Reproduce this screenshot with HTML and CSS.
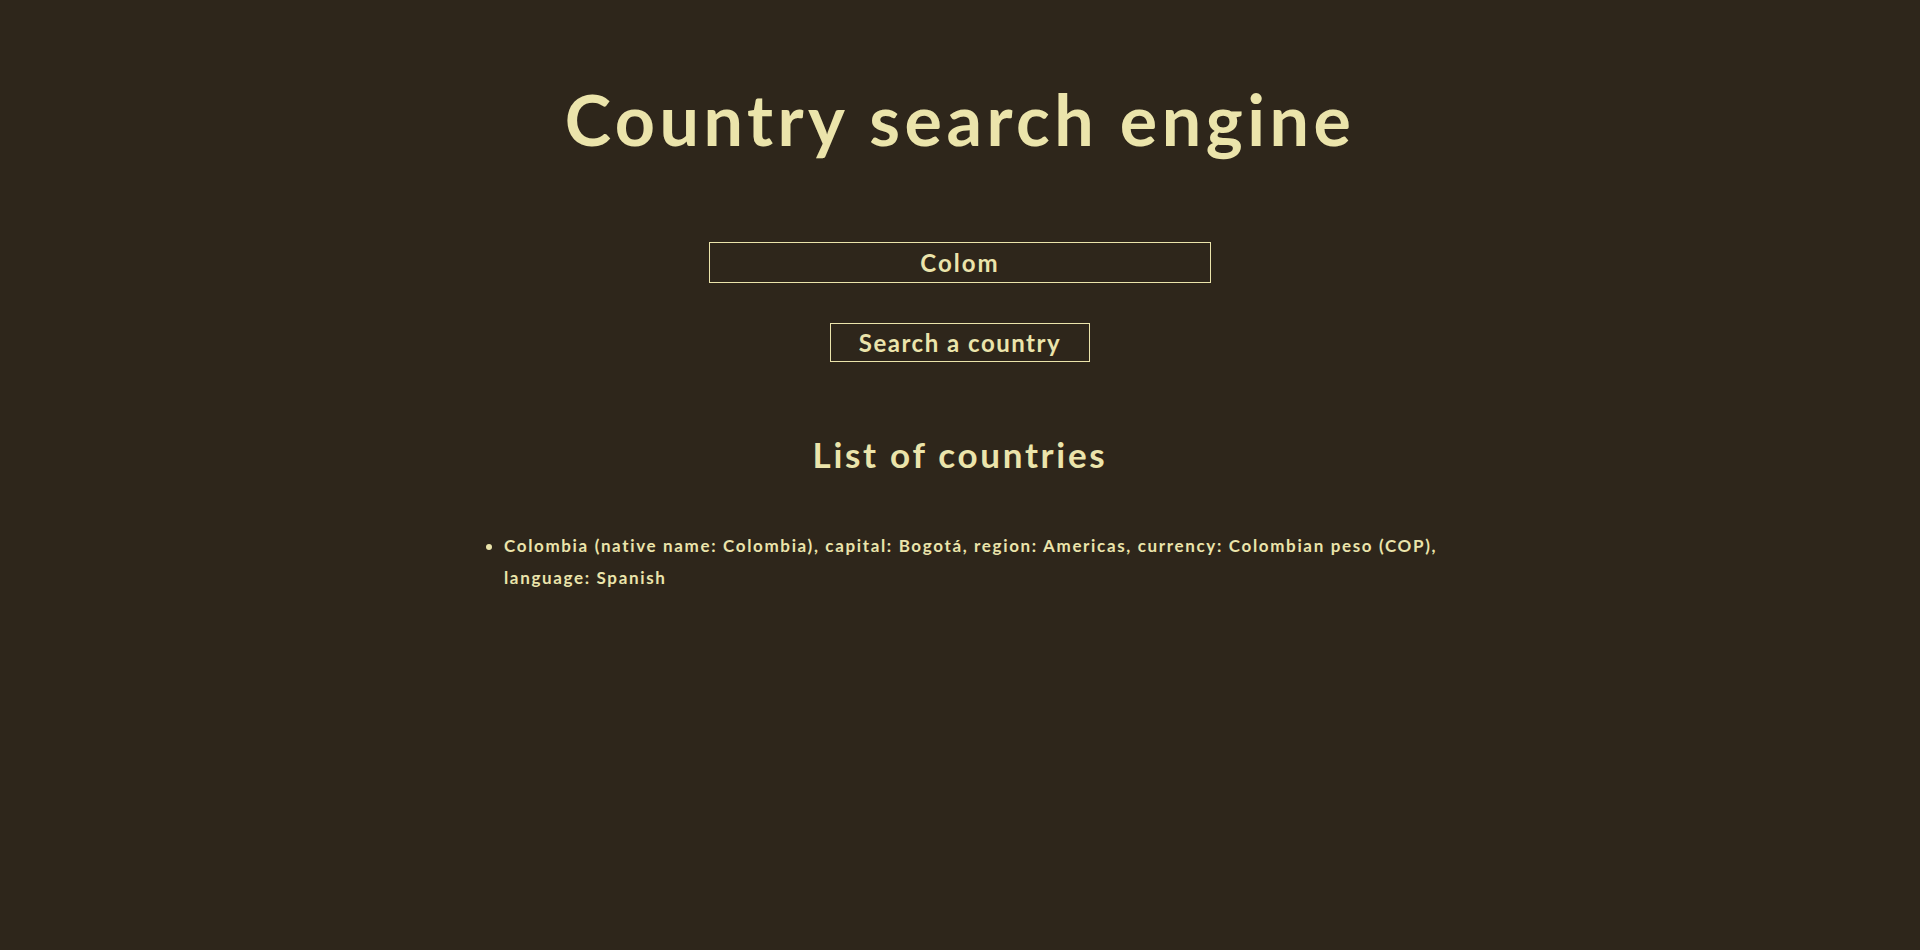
FILE: index.html
```html
<!DOCTYPE html>
<html lang="en">
<head>
<meta charset="utf-8">
<title>Country search engine</title>
<link rel="stylesheet" href="styles.css">
</head>
<body>
<main class="page">
  <h1 class="title">Country search engine</h1>
  <form class="search">
    <input class="search-input" type="text" value="Colom">
    <button class="search-button" type="button">Search a country</button>
  </form>
  <section class="results">
    <h2 class="results-title">List of countries</h2>
    <ul class="results-list">
      <li>Colombia (native name: Colombia), capital: Bogotá, region: Americas, currency: Colombian peso (COP), language: Spanish</li>
    </ul>
  </section>
</main>
</body>
</html>
```
FILE: styles.css
```css
html, body {
  margin: 0;
  padding: 0;
  background: #2e261b;
  height: 100%;
}
body {
  color: #ebe4ab;
  font-family: Lato, "Open Sans", sans-serif;
  font-weight: 700;
}
.page {
  width: 992px;
  margin: 0 auto;
  display: flex;
  flex-direction: column;
  align-items: center;
}
.title {
  margin: 77px 0 0;
  font-size: 70px;
  line-height: 84px;
  font-weight: 700;
  letter-spacing: 4.5px;
}
.search {
  margin-top: 81px;
  display: flex;
  flex-direction: column;
  align-items: center;
  gap: 40px;
}
.search-input {
  box-sizing: border-box;
  width: 502px;
  height: 41px;
  background: transparent;
  border: 1px solid #ebe4ab;
  color: #ebe4ab;
  font-family: inherit;
  font-weight: 700;
  font-size: 24px;
  letter-spacing: 2px;
  text-align: center;
  outline: none;
  padding: 0 8px;
}
.search-button {
  box-sizing: border-box;
  width: 260px;
  height: 39px;
  background: transparent;
  border: 1px solid #ebe4ab;
  color: #ebe4ab;
  font-family: inherit;
  font-weight: 700;
  font-size: 24px;
  letter-spacing: 1.5px;
  padding: 0;
}
.results {
  align-self: stretch;
  display: flex;
  flex-direction: column;
  align-items: center;
}
.results-title {
  margin: 71px 0 0;
  font-size: 35px;
  line-height: 42px;
  font-weight: 700;
  letter-spacing: 2.7px;
}
.results-list {
  align-self: stretch;
  margin: 55px 0 0;
  padding-left: 40px;
  font-size: 17px;
  line-height: 32px;
  letter-spacing: 1.65px;
}
```
